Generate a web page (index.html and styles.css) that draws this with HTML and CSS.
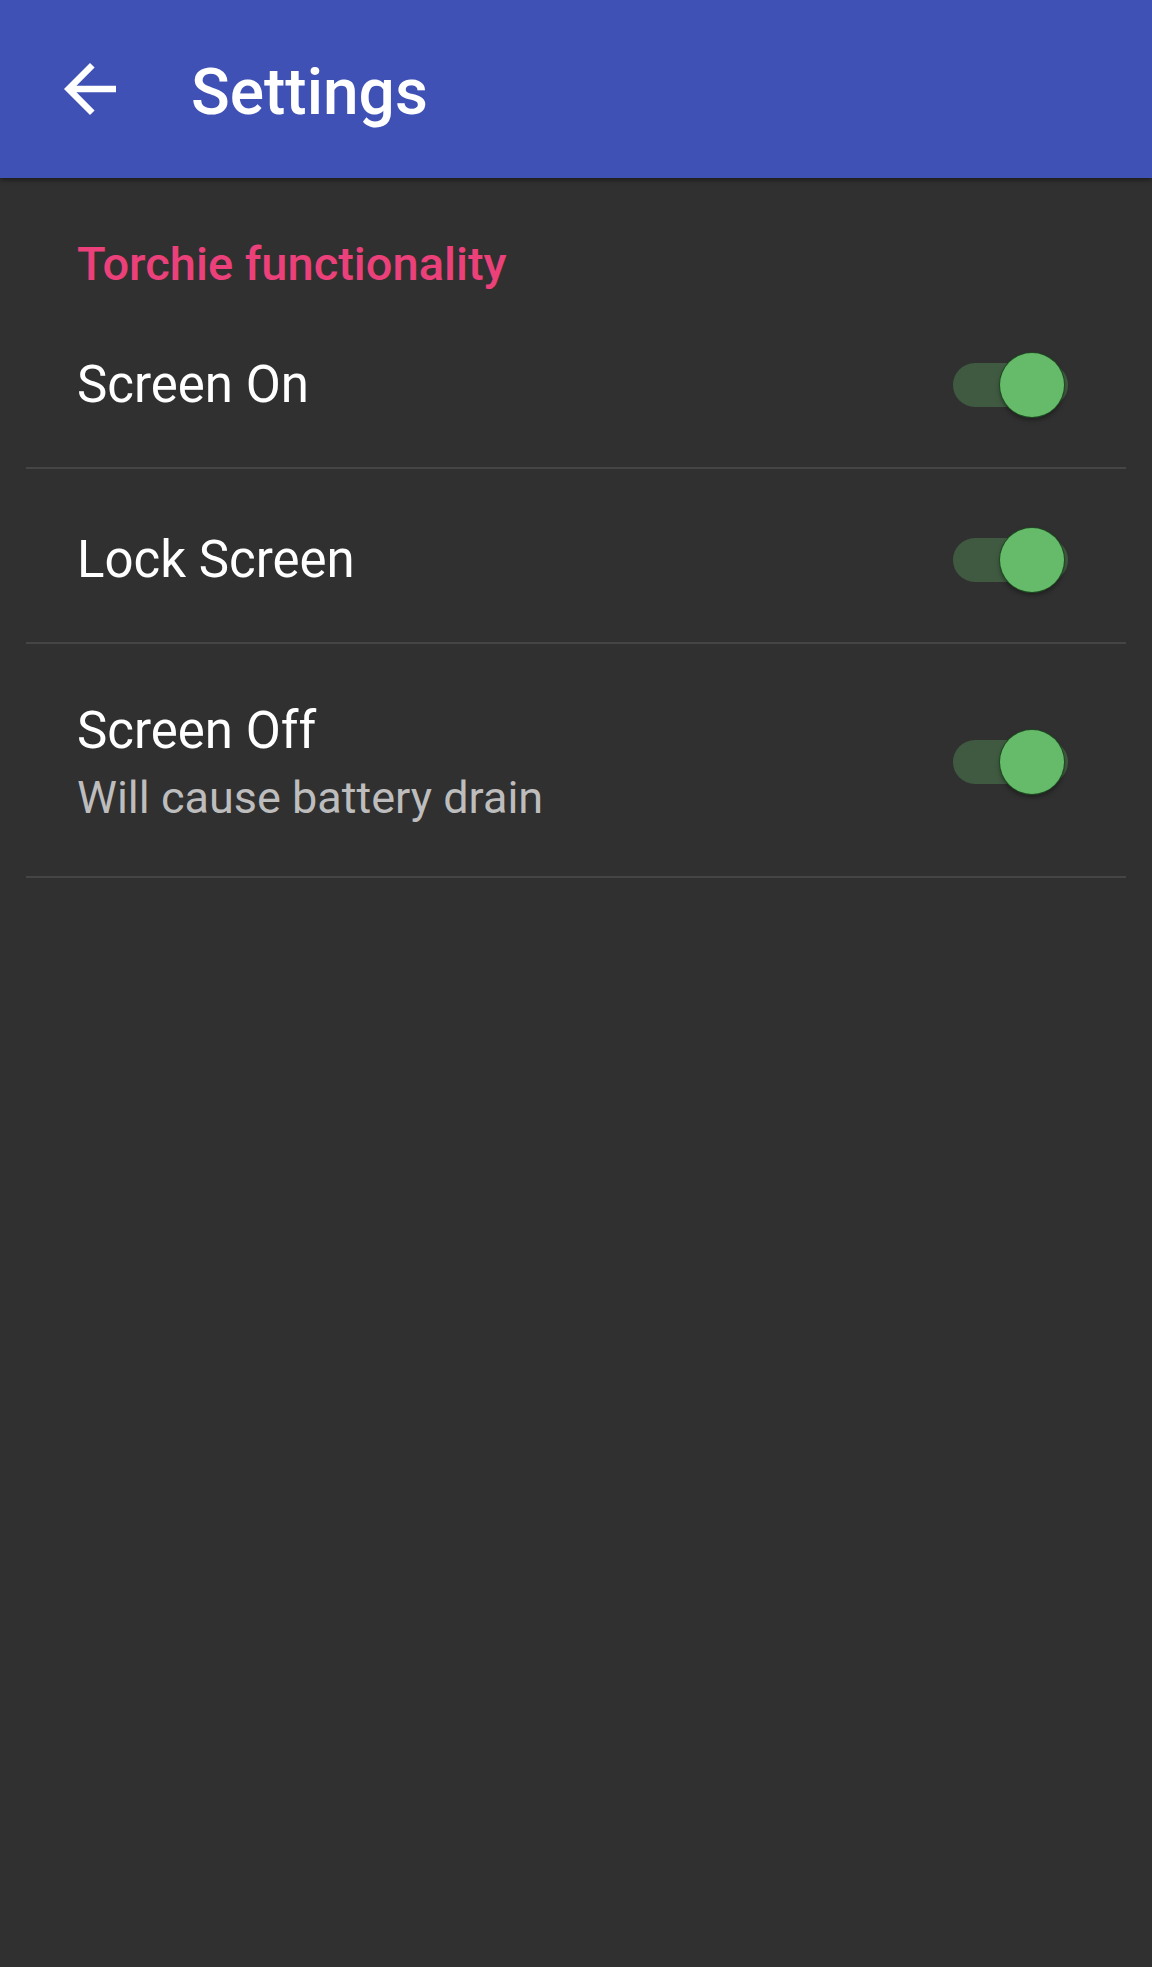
FILE: index.html
```html
<!DOCTYPE html>
<html>
<head>
<meta charset="utf-8">
<title>Settings</title>
<link rel="stylesheet" href="styles.css">
</head>
<body>
<div class="toolbar">
	<a class="back" href="javascript:;">
		<svg viewBox="0 0 24 24" width="78" height="78"><path fill="#fff" d="M20 11H7.83l5.59-5.59L12 4l-8 8 8 8 1.41-1.41L7.83 13H20v-2z"/></svg>
	</a>
	<h1 class="title">Settings</h1>
</div>

<div class="category">Torchie functionality</div>

<ul class="prefs">
	<li class="pref">
		<div class="pref-text">
			<div class="pref-title">Screen On</div>
		</div>
		<span class="switch on"><span class="thumb"></span></span>
	</li>
	<li class="pref">
		<div class="pref-text">
			<div class="pref-title">Lock Screen</div>
		</div>
		<span class="switch on"><span class="thumb"></span></span>
	</li>
	<li class="pref pref-two">
		<div class="pref-text">
			<div class="pref-title">Screen Off</div>
			<div class="pref-summary">Will cause battery drain</div>
		</div>
		<span class="switch on"><span class="thumb"></span></span>
	</li>
</ul>
</body>
</html>
```

FILE: styles.css
```css
* { margin: 0; padding: 0; }

html, body {
	height: 100%;
}
body {
	background: #303030;
	font-family: Roboto, "Liberation Sans", sans-serif;
	color: #fff;
}

.toolbar {
	height: 178px;
	background: #3f51b5;
	display: flex;
	align-items: center;
	box-shadow: 0 2px 5px rgba(0, 0, 0, 0.45);
	position: relative;
}
.back {
	display: block;
	width: 78px;
	height: 78px;
	margin-left: 51px;
}
.back svg {
	display: block;
}
.title {
	font-size: 64px;
	font-weight: 500;
	line-height: 64px;
	margin-left: 62px;
	padding-top: 7px;
}

.category {
	color: #ec407a;
	font-size: 47px;
	font-weight: 500;
	line-height: 58px;
	padding: 57px 0 0 77px;
	height: 58px;
}

.prefs {
	list-style: none;
	margin: 0 26px;
}
.pref {
	display: flex;
	align-items: center;
	padding: 61px 58px 52px 51px;
	border-bottom: 2px solid #454545;
}
.pref:first-child {
	padding-top: 62px;
}
.pref-two {
	padding-top: 57px;
	padding-bottom: 53px;
}
.pref-text {
	flex: 1;
}
.pref-title {
	font-size: 51px;
	line-height: 60px;
}
.pref-summary {
	font-size: 45px;
	line-height: 50px;
	margin-top: 12px;
	color: #bdbdbd;
}

.switch {
	display: block;
	position: relative;
	width: 115px;
	height: 44px;
	border-radius: 22px;
	background: #405a41;
}
.switch .thumb {
	position: absolute;
	left: 47px;
	top: -10px;
	width: 64px;
	height: 64px;
	border-radius: 50%;
	background: #66bb6a;
	box-shadow: 0 0 0 1px #1f4a22, 0 3px 5px rgba(0, 0, 0, 0.4);
}
```
